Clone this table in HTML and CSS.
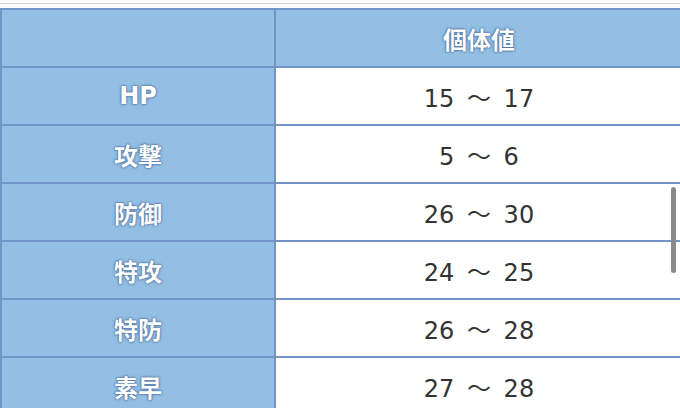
FILE: index.html
```html
<!DOCTYPE html>
<html lang="ja">
<head>
<meta charset="utf-8">
<link rel="stylesheet" href="styles.css">
</head>
<body>
<div class="topbar"><div class="topline"></div></div>
<table class="stats">
  <thead>
    <tr><th class="label"></th><th class="head">個体値</th></tr>
  </thead>
  <tbody>
    <tr><th class="label">HP</th><td>15 ～ 17</td></tr>
    <tr><th class="label">攻撃</th><td>5 ～ 6</td></tr>
    <tr><th class="label">防御</th><td>26 ～ 30</td></tr>
    <tr><th class="label">特攻</th><td>24 ～ 25</td></tr>
    <tr><th class="label">特防</th><td>26 ～ 28</td></tr>
    <tr><th class="label">素早</th><td>27 ～ 28</td></tr>
  </tbody>
</table>
<div class="scrollbar"></div>
</body>
</html>
```
FILE: styles.css
```css
html, body {
  margin: 0;
  padding: 0;
  background: #ffffff;
  overflow: hidden;
  width: 680px;
  height: 408px;
  font-family: "DejaVu Sans", "Noto Sans CJK JP", sans-serif;
}
.topbar {
  height: 8px;
  padding-top: 3px;
  box-sizing: border-box;
  background: #fbfbfb;
}
.topline {
  height: 1px;
  background: #cfd3d8;
}
.stats {
  border-collapse: collapse;
  width: 684px;
  table-layout: fixed;
}
.stats th, .stats td {
  border: 2px solid #7195c6;
  height: 56px;
  padding: 0;
  text-align: center;
  vertical-align: middle;
}
.stats th.label {
  width: 272px;
}
.stats th {
  background: #93bfe4;
  color: #ffffff;
  font-weight: 700;
  font-size: 24px;
  text-shadow: 0 0 2px #48699a, 0 0 3px #5a7fb2, 0 0 1px #48699a;
}
.stats td {
  background: #ffffff;
  color: #333333;
  font-size: 24px;
  font-weight: 400;
  word-spacing: 5px;
}
.scrollbar {
  position: absolute;
  left: 671px;
  top: 187px;
  width: 5px;
  height: 86px;
  border-radius: 3px;
  background: #8b8b8b;
}
```
